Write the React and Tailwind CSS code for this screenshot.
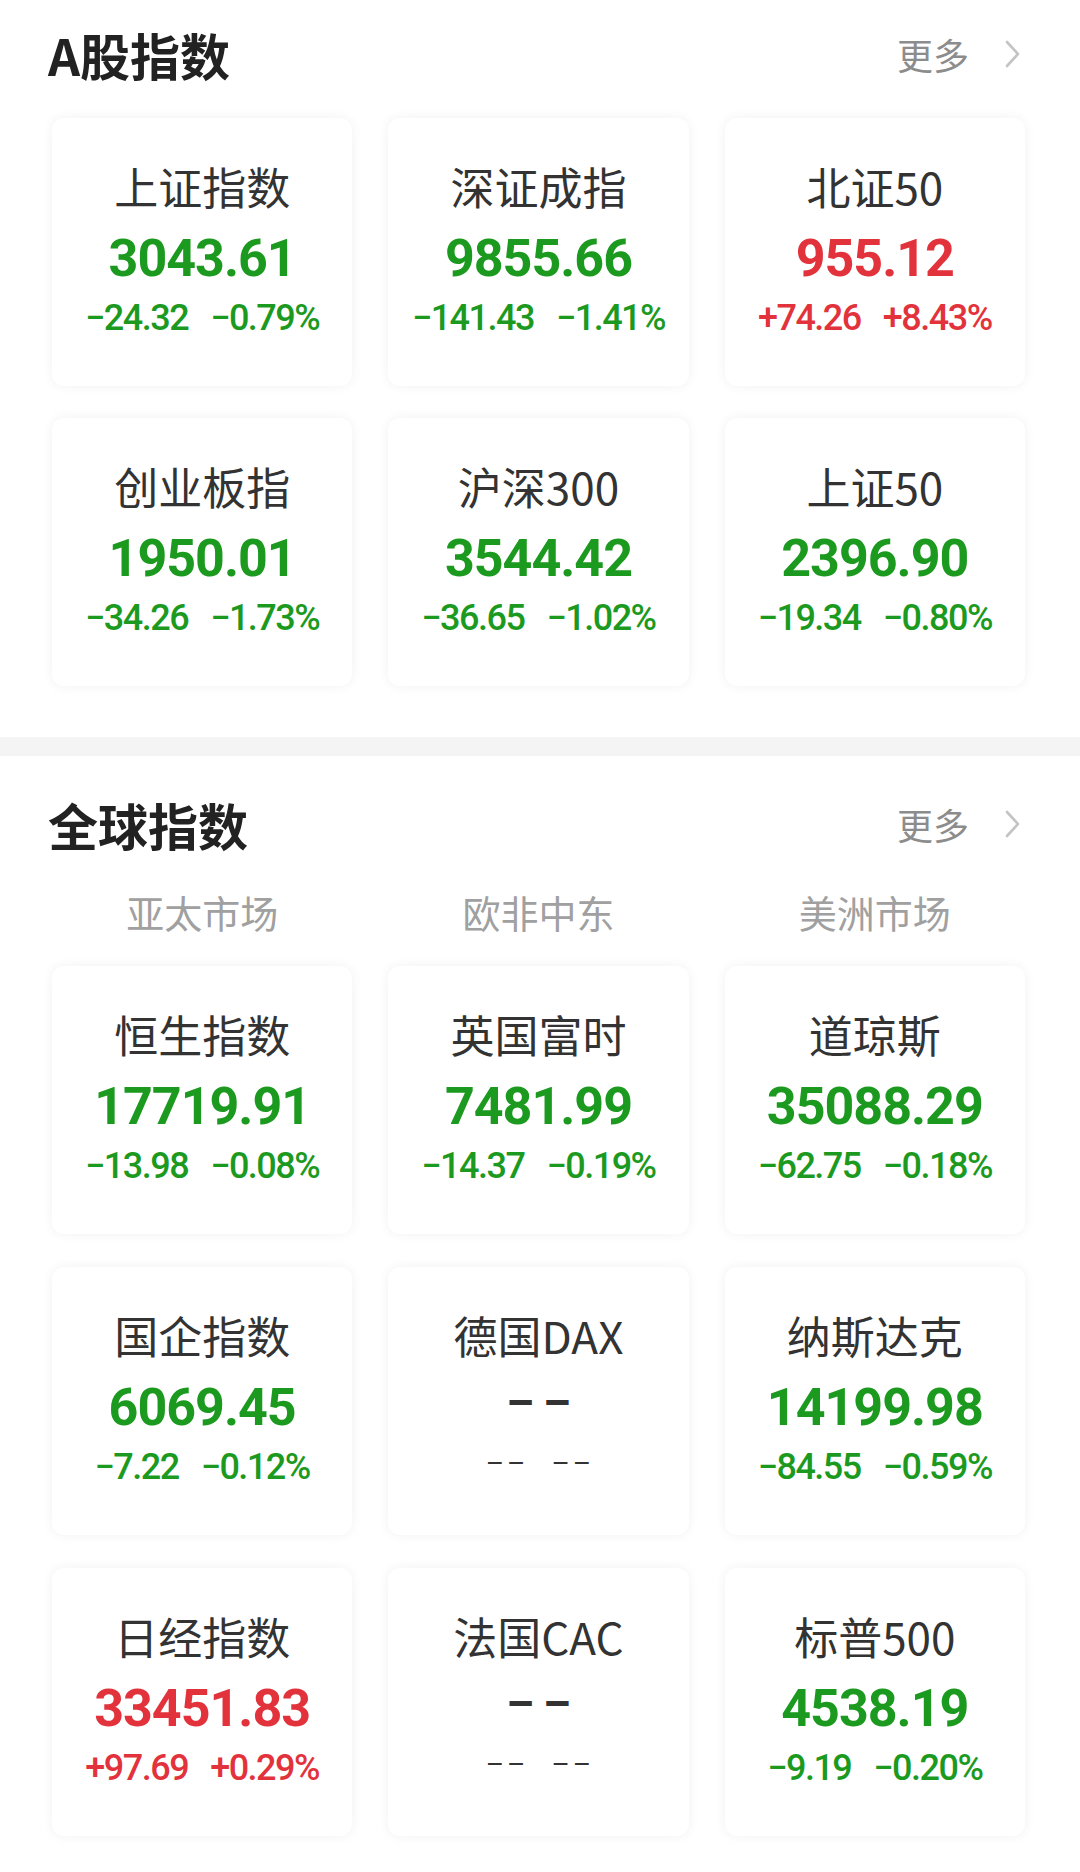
import React from "react";

const GREEN = "text-[#1c9a1f]";
const RED = "text-[#e2333c]";

const aShares = [
  { name: "上证指数", value: "3043.61", chg: "−24.32", pct: "−0.79%", up: false },
  { name: "深证成指", value: "9855.66", chg: "−141.43", pct: "−1.41%", up: false },
  { name: "北证50", value: "955.12", chg: "+74.26", pct: "+8.43%", up: true },
  { name: "创业板指", value: "1950.01", chg: "−34.26", pct: "−1.73%", up: false },
  { name: "沪深300", value: "3544.42", chg: "−36.65", pct: "−1.02%", up: false },
  { name: "上证50", value: "2396.90", chg: "−19.34", pct: "−0.80%", up: false },
];

const globalIdx = [
  { name: "恒生指数", value: "17719.91", chg: "−13.98", pct: "−0.08%", up: false },
  { name: "英国富时", value: "7481.99", chg: "−14.37", pct: "−0.19%", up: false },
  { name: "道琼斯", value: "35088.29", chg: "−62.75", pct: "−0.18%", up: false },
  { name: "国企指数", value: "6069.45", chg: "−7.22", pct: "−0.12%", up: false },
  { name: "德国DAX", empty: true },
  { name: "纳斯达克", value: "14199.98", chg: "−84.55", pct: "−0.59%", up: false },
  { name: "日经指数", value: "33451.83", chg: "+97.69", pct: "+0.29%", up: true },
  { name: "法国CAC", empty: true },
  { name: "标普500", value: "4538.19", chg: "−9.19", pct: "−0.20%", up: false },
];

const cjk = { fontFamily: '"Noto Sans CJK SC", "Noto Sans", sans-serif' };
const num = { fontFamily: 'Roboto, "Noto Sans", sans-serif' };

function Header({ title }) {
  return (
    <div className="flex items-center justify-between pl-[48px] pr-[59px]">
      <div className="text-[50px] leading-[50px] font-bold text-[#222]" style={cjk}>
        {title}
      </div>
      <div className="flex items-center">
        <span className="text-[36px] leading-[36px] text-[#8c8c8c]" style={cjk}>更多</span>
        <svg className="ml-[36px]" width="16" height="28" viewBox="0 0 16 28" fill="none">
          <path d="M2 2 L13 14 L2 26" stroke="#c4c4c4" strokeWidth="2.6" strokeLinecap="round" strokeLinejoin="round" />
        </svg>
      </div>
    </div>
  );
}

function Card({ item }) {
  const color = item.up ? RED : GREEN;
  return (
    <div className="h-[268px] rounded-[12px] bg-white shadow-[0_0_12px_rgba(0,0,0,0.06)] flex flex-col items-center pt-[46px]">
      <div className="text-[44px] leading-[44px] text-[#333]" style={cjk}>
        {item.name}
      </div>
      {item.empty ? (
        <>
          <div className="mt-[25px] h-[52px] flex items-center justify-center pb-[11px]">
            <span className="text-[44px] leading-none font-bold text-[#333] tracking-[9px] pl-[9px]" style={num}>
              ––
            </span>
          </div>
          <div className="mt-[15px] h-[36px] flex items-center justify-center gap-[20px] pb-[6px]">
            <span className="text-[28px] leading-none text-[#333] tracking-[3px] pl-[3px]" style={num}>––</span>
            <span className="text-[28px] leading-none text-[#333] tracking-[3px] pl-[3px]" style={num}>––</span>
          </div>
        </>
      ) : (
        <>
          <div className={`mt-[25px] text-[52px] leading-[52px] font-bold tracking-[-1px] ${color}`} style={num}>
            {item.value}
          </div>
          <div className={`mt-[15px] flex items-center gap-[22px] text-[36px] leading-[36px] font-medium tracking-[-1.5px] ${color}`} style={num}>
            <span>{item.chg}</span>
            <span>{item.pct}</span>
          </div>
        </>
      )}
    </div>
  );
}

export default function App() {
  return (
    <div className="w-[1080px] h-[1872px] bg-white overflow-hidden">
      <section className="pt-[29px]">
        <Header title="A股指数" />
        <div className="mt-[39px] grid grid-cols-3 gap-x-[36px] gap-y-[32px] pl-[52px] pr-[55px]">
          {aShares.map((it) => (
            <Card key={it.name} item={it} />
          ))}
        </div>
      </section>

      <div className="mt-[51px] h-[19px] bg-[#f4f4f4]" />

      <section className="pt-[43px]">
        <Header title="全球指数" />
        <div className="mt-[44px] grid grid-cols-3 gap-x-[36px] pl-[52px] pr-[55px]">
          {["亚太市场", "欧非中东", "美洲市场"].map((t) => (
            <div key={t} className="text-center text-[38px] leading-[38px] text-[#a0a0a0]" style={cjk}>
              {t}
            </div>
          ))}
        </div>
        <div className="mt-[35px] grid grid-cols-3 gap-x-[36px] gap-y-[33px] pl-[52px] pr-[55px]">
          {globalIdx.map((it) => (
            <Card key={it.name} item={it} />
          ))}
        </div>
      </section>
    </div>
  );
}
